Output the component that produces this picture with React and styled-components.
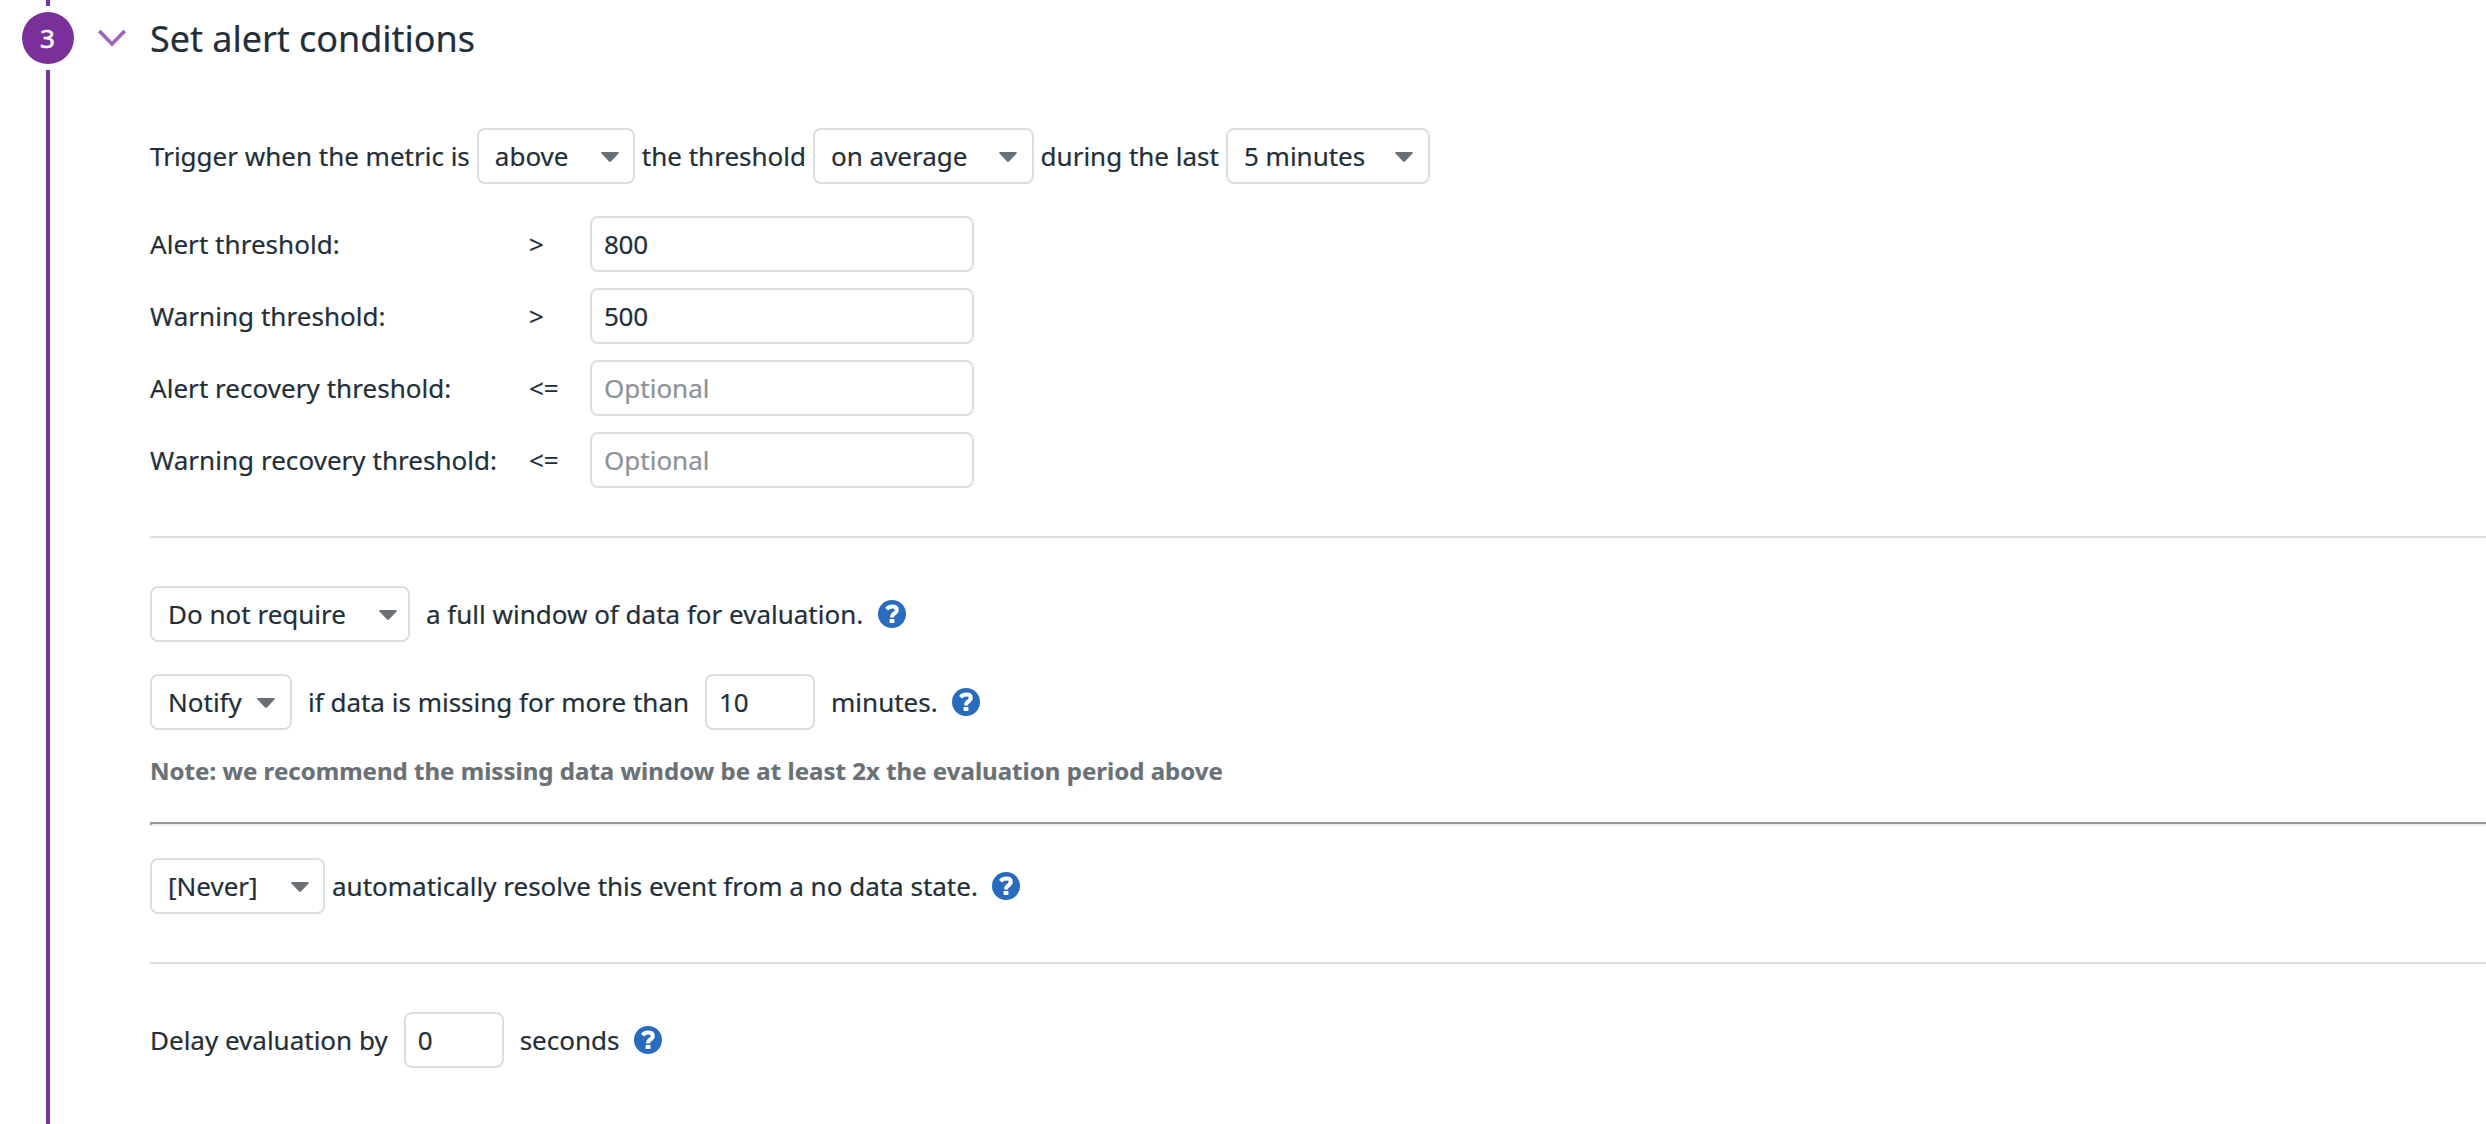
import React from "react";
import styled, { createGlobalStyle } from "styled-components";

const Global = createGlobalStyle`
  *, *::before, *::after { box-sizing: border-box; }
  body { margin: 0; background: #fff; overflow: hidden; }
`;

const Page = styled.main`
  display: flex;
  height: 1124px;
  overflow: hidden;
  color: #232f38;
  font: 26px/36px "Noto Sans", sans-serif;
  -webkit-text-stroke: 0.2px;
`;

const Rail = styled.div`
  flex: none;
  width: 74px;
  padding-left: 22px;
  display: flex;
  flex-direction: column;
  align-items: center;
  gap: 6px;
`;

const RailLine = styled.div`
  width: 4px;
  background: #7b319e;
  ${(p) => (p.$grow ? "flex: 1;" : "height: 6px;")}
`;

const StepBadge = styled.div`
  width: 52px;
  height: 52px;
  padding-right: 1px;
  border-radius: 50%;
  display: flex;
  align-items: center;
  justify-content: center;
  background: #7a2f9b;
  color: #fff;
  -webkit-text-stroke: 0.6px;
`;

const Panel = styled.section`
  flex: 1;
  min-width: 0;
  padding-left: 24px;
`;

const Header = styled.header`
  display: flex;
  align-items: center;
  gap: 24px;
  height: 76px;
`;

const Title = styled.h2`
  margin: 0;
  padding-top: 2px;
  font-size: 36px;
  line-height: 48px;
  font-weight: 400;
  letter-spacing: -0.04px;
`;

const Body = styled.div`
  padding: 52px 0 0 52px;
  display: flex;
  flex-direction: column;
`;

const Line = styled.div`
  display: flex;
  align-items: center;
  height: 56px;
  gap: ${(p) => p.$gap || 0}px;
  margin-bottom: ${(p) => p.$after || 0}px;
  white-space: nowrap;
`;

const SelectBox = styled.button`
  flex: none;
  width: ${(p) => p.$w}px;
  height: 56px;
  padding: 0 ${(p) => p.$pr || 14}px 0 16px;
  border: 2px solid #dddde4;
  border-radius: 8px;
  background: #fff;
  color: inherit;
  font: inherit;
  display: flex;
  align-items: center;
  justify-content: space-between;
`;

const CaretSvg = styled.svg`
  flex: none;
  margin-top: 2px;
`;

const Field = styled.input`
  flex: none;
  width: ${(p) => p.$w}px;
  height: 56px;
  padding: 0 12px;
  border: 2px solid #dddde4;
  border-radius: 8px;
  background: #fff;
  color: inherit;
  font: inherit;
  letter-spacing: -0.3px;
  outline: none;
  &::placeholder { color: #8d9397; opacity: 1; letter-spacing: 0; }
`;

const Thresholds = styled.div`
  display: grid;
  grid-template-columns: 379px 61px 384px;
  grid-auto-rows: 56px;
  row-gap: 16px;
  align-items: center;
  margin-bottom: 48px;
`;

const ThresholdLabel = styled.label`
  letter-spacing: 0.04px;
`;

const Divider = styled.hr`
  width: 100%;
  height: 2px;
  margin: 0 0 48px;
  border: 0;
  background: #dddde4;
`;

const InsetRule = styled.hr`
  width: calc(100% + 8px);
  height: 4px;
  margin: 0 0 32px;
  border: 2px solid;
  border-color: #9a9a9a #eee #eee #9a9a9a;
`;

const Note = styled.p`
  margin: 23px 0 33px;
  height: 36px;
  color: #697177;
  font-size: 24px;
  font-weight: 700;
  letter-spacing: 0.03px;
`;

const HelpSvg = styled.svg`
  flex: none;
  margin-left: ${(p) => p.$ml || 0}px;
`;

const Caret = () => (
  <CaretSvg width="18" height="10" viewBox="0 0 18 10">
    <path d="M1 0h16q1.4.5.5 1.6L10 9.4q-1 .9-2 0L.5 1.6Q-.4.5 1 0z" fill="#697177" />
  </CaretSvg>
);

const Select = ({ w, pr, children }) => (
  <SelectBox type="button" $w={w} $pr={pr}>
    <span>{children}</span>
    <Caret />
  </SelectBox>
);

const Help = ({ ml }) => (
  <HelpSvg $ml={ml} width="28" height="28" viewBox="0 0 28 28">
    <circle cx="14" cy="14" r="14" fill="#296bbd" />
    <path d="M8.6 9.2Q10.8 6.6 14.2 6.6 18.8 6.6 18.8 10 18.8 12 16.4 13.4 14 14.8 14 17.6" fill="none" stroke="#fff" strokeWidth="4" />
    <rect x="11.6" y="19" width="4.8" height="4" fill="#fff" />
  </HelpSvg>
);

const thresholds = [
  { label: "Alert threshold:", op: ">", value: "800" },
  { label: "Warning threshold:", op: ">", value: "500" },
  { label: "Alert recovery threshold:", op: "<=" },
  { label: "Warning recovery threshold:", op: "<=" },
];

export default function App() {
  return (
    <>
      <Global />
      <Page>
        <Rail>
          <RailLine />
          <StepBadge>3</StepBadge>
          <RailLine $grow />
        </Rail>
        <Panel>
          <Header>
            <svg width="28" height="18" viewBox="0 0 28 18">
              <path d="M1.3 2 14 14.9 26.7 2" fill="none" stroke="#9c62bd" strokeWidth="3.6" />
            </svg>
            <Title>Set alert conditions</Title>
          </Header>
          <Body>
            <Line $gap={7} $after={32}>
              <span>Trigger when the metric is</span>
              <Select w={158}>above</Select>
              <span>the threshold</span>
              <Select w={220.6} pr={15}>on average</Select>
              <span>during the last</span>
              <Select w={204} pr={15}>5 minutes</Select>
            </Line>
            <Thresholds>
              {thresholds.map((t) => (
                <React.Fragment key={t.label}>
                  <ThresholdLabel>{t.label}</ThresholdLabel>
                  <span>{t.op}</span>
                  <Field $w={384} defaultValue={t.value} placeholder="Optional" />
                </React.Fragment>
              ))}
            </Thresholds>
            <Divider />
            <Line $gap={16} $after={32}>
              <Select w={260} pr={11}>Do not require</Select>
              <span>a full window of data for evaluation.</span>
              <Help ml={-1} />
            </Line>
            <Line $gap={16}>
              <Select w={142} pr={15}>Notify</Select>
              <span>if data is missing for more than</span>
              <Field $w={110} defaultValue="10" />
              <span>minutes.</span>
              <Help ml={-2} />
            </Line>
            <Note>Note: we recommend the missing data window be at least 2x the evaluation period above</Note>
            <InsetRule />
            <Line $gap={7} $after={48}>
              <Select w={175}>[Never]</Select>
              <span>automatically resolve this event from a no data state.</span>
              <Help ml={7} />
            </Line>
            <Divider />
            <Line $gap={16}>
              <span>Delay evaluation by</span>
              <Field $w={100} defaultValue="0" />
              <span>seconds</span>
              <Help ml={-1} />
            </Line>
          </Body>
        </Panel>
      </Page>
    </>
  );
}
